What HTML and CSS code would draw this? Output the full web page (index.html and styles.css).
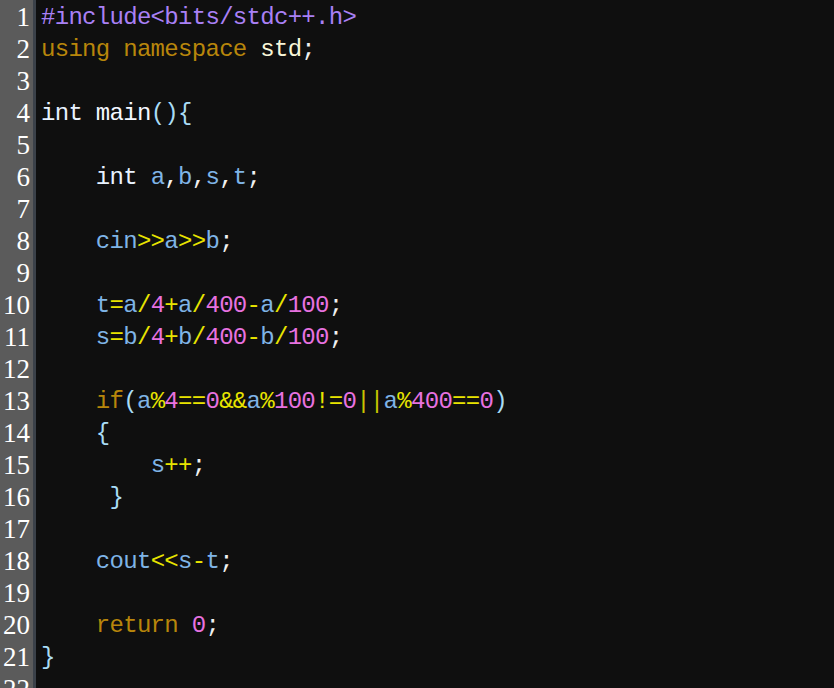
FILE: index.html
```html
<!DOCTYPE html>
<html>
<head>
<meta charset="utf-8">
<link rel="stylesheet" href="styles.css">
</head>
<body>
<div class="editor">
  <div class="gutter">
    <div>1</div><div>2</div><div>3</div><div>4</div><div>5</div><div>6</div><div>7</div><div>8</div><div>9</div><div>10</div><div>11</div><div>12</div><div>13</div><div>14</div><div>15</div><div>16</div><div>17</div><div>18</div><div>19</div><div>20</div><div>21</div><div>22</div>
  </div>
  <div class="code">
<div class="ln"><span class="pp">#include&lt;bits/stdc++.h&gt;</span></div>
<div class="ln"><span class="kw">using namespace</span> <span class="std">std</span><span class="pn">;</span></div>
<div class="ln"> </div>
<div class="ln"><span class="ty">int</span> <span class="fn">main</span><span class="br">(){</span></div>
<div class="ln"> </div>
<div class="ln">    <span class="ty">int</span> <span class="id">a</span><span class="pn">,</span><span class="id">b</span><span class="pn">,</span><span class="id">s</span><span class="pn">,</span><span class="id">t</span><span class="pn">;</span></div>
<div class="ln"> </div>
<div class="ln">    <span class="id">cin</span><span class="op">&gt;&gt;</span><span class="id">a</span><span class="op">&gt;&gt;</span><span class="id">b</span><span class="pn">;</span></div>
<div class="ln"> </div>
<div class="ln">    <span class="id">t</span><span class="op">=</span><span class="id">a</span><span class="op">/</span><span class="nu">4</span><span class="op">+</span><span class="id">a</span><span class="op">/</span><span class="nu">400</span><span class="op">-</span><span class="id">a</span><span class="op">/</span><span class="nu">100</span><span class="pn">;</span></div>
<div class="ln">    <span class="id">s</span><span class="op">=</span><span class="id">b</span><span class="op">/</span><span class="nu">4</span><span class="op">+</span><span class="id">b</span><span class="op">/</span><span class="nu">400</span><span class="op">-</span><span class="id">b</span><span class="op">/</span><span class="nu">100</span><span class="pn">;</span></div>
<div class="ln"> </div>
<div class="ln">    <span class="kw">if</span><span class="br">(</span><span class="id">a</span><span class="op">%</span><span class="nu">4</span><span class="op">==</span><span class="nu">0</span><span class="op">&amp;&amp;</span><span class="id">a</span><span class="op">%</span><span class="nu">100</span><span class="op">!=</span><span class="nu">0</span><span class="op2">||</span><span class="id">a</span><span class="op">%</span><span class="nu">400</span><span class="op">==</span><span class="nu">0</span><span class="br">)</span></div>
<div class="ln">    <span class="br">{</span></div>
<div class="ln">        <span class="id">s</span><span class="op">++</span><span class="pn">;</span></div>
<div class="ln">     <span class="br">}</span></div>
<div class="ln"> </div>
<div class="ln">    <span class="id">cout</span><span class="op">&lt;&lt;</span><span class="id">s</span><span class="op">-</span><span class="id">t</span><span class="pn">;</span></div>
<div class="ln"> </div>
<div class="ln">    <span class="kw">return</span> <span class="nu">0</span><span class="pn">;</span></div>
<div class="ln"><span class="br">}</span></div>
<div class="ln"> </div>
  </div>
</div>
</body>
</html>
```

FILE: styles.css
```css
html, body {
  margin: 0;
  padding: 0;
  background: #0f0f0f;
  overflow: hidden;
}
.editor {
  display: flex;
  width: 834px;
  height: 688px;
  overflow: hidden;
  background: #0f0f0f;
}
.gutter {
  flex: 0 0 33px;
  background: #5b5b5b;
  border-right: 3px solid #3b4149;
  font-family: "Liberation Serif", serif;
  font-size: 27px;
  line-height: 32px;
  color: #ffffff;
  text-align: right;
  padding-top: 1px;
}
.gutter div {
  height: 32px;
  padding-right: 3px;
}
.code {
  padding-left: 5px;
  padding-top: 2px;
  font-family: "Liberation Mono", monospace;
  font-size: 24px;
  letter-spacing: -0.7px;
  line-height: 32px;
  color: #f0f0f0;
}
.ln {
  height: 32px;
  white-space: pre;
}
.pp { color: #a980f5; }
.kw { color: #b8860b; }
.std { color: #f8f6d8; }
.pn { color: #f0f0f0; }
.ty { color: #e8f2ff; }
.fn { color: #f4f8ff; }
.br { color: #a9dcf5; }
.id { color: #7fb4e6; }
.op { color: #e8e400; }
.op2 { color: #c8c400; }
.nu { color: #e872e0; }
```
